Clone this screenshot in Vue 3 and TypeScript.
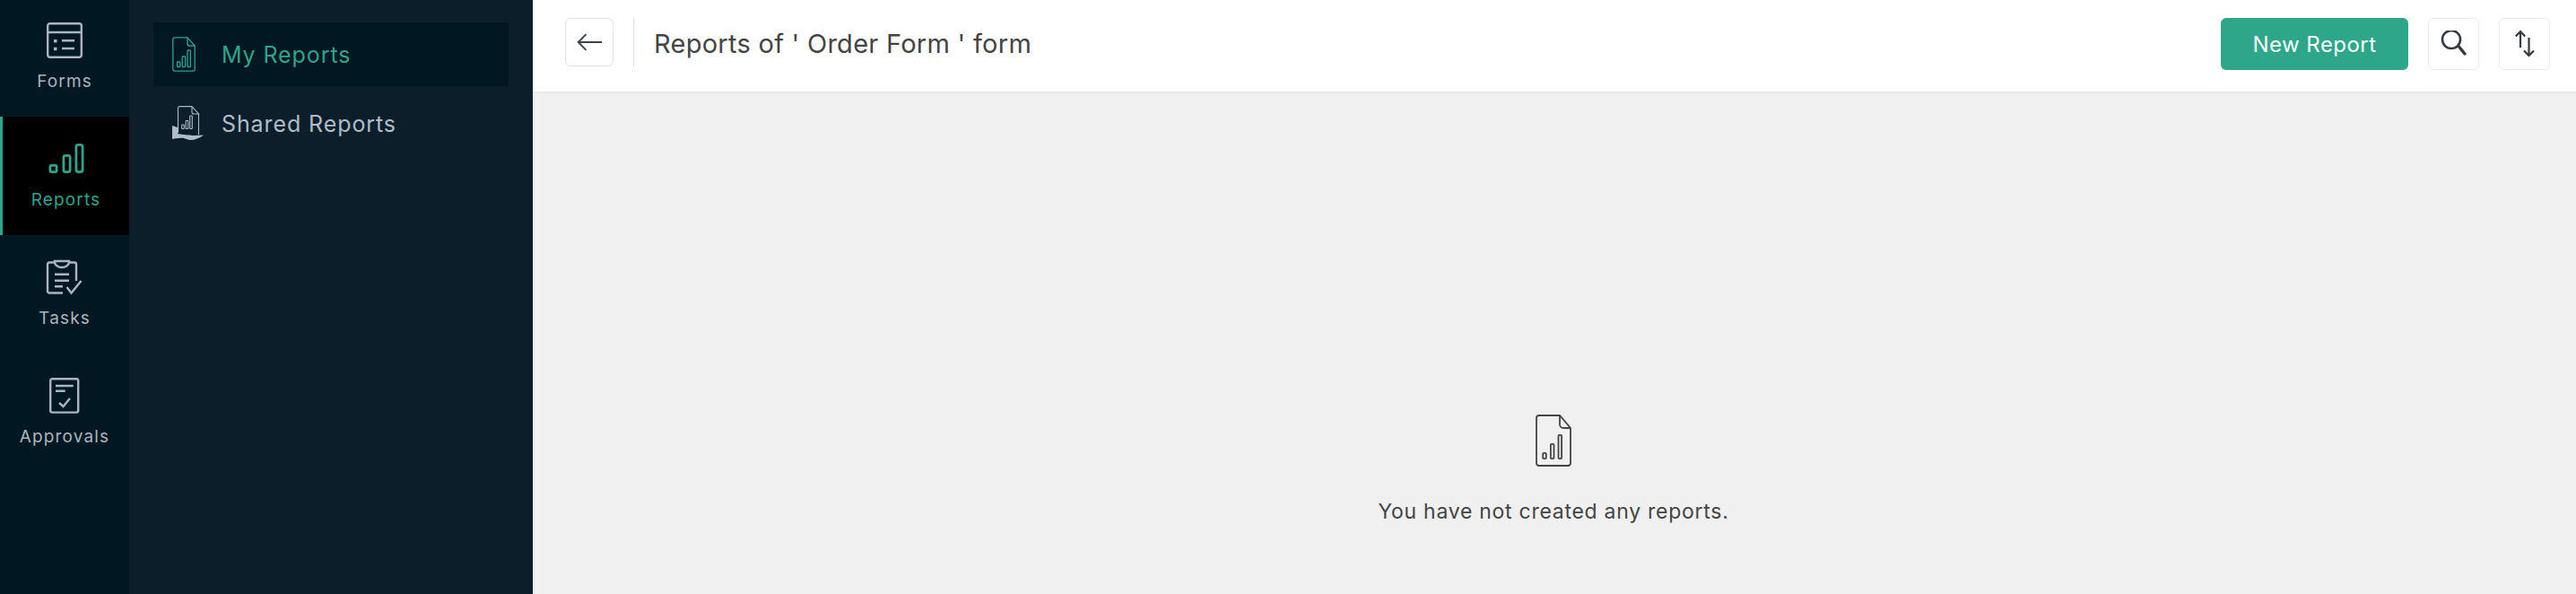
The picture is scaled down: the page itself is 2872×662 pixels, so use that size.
<script setup lang="ts">
const railItems = [
  { key: 'forms', label: 'Forms', active: false },
  { key: 'reports', label: 'Reports', active: true },
  { key: 'tasks', label: 'Tasks', active: false },
  { key: 'approvals', label: 'Approvals', active: false },
]
</script>

<template>
  <div class="app">
    <nav class="rail">
      <a
        v-for="item in railItems"
        :key="item.key"
        class="rail-item"
        :class="{ active: item.active }"
      >
        <svg class="rail-icon" viewBox="0 0 44 44" fill="none" stroke="currentColor" stroke-width="2.4">
          <template v-if="item.key === 'forms'">
            <rect x="3.2" y="3.2" width="37.6" height="37.6" rx="2.5" />
            <path d="M3 13h38M19 22.300h14M19 31h14" />
            <path d="M10 21h3.500v3.500H10zM10 29.700h3.500v3.500H10z" fill="currentColor" stroke="none" />
          </template>
          <template v-else-if="item.key === 'reports'">
            <rect x="3.900" y="29.400" width="7.200" height="7.200" rx="1.500" stroke-width="2.800" />
            <rect x="18.900" y="18.400" width="7.200" height="18.200" rx="2" stroke-width="2.800" />
            <rect x="32.900" y="6.400" width="7.200" height="30.200" rx="2.500" stroke-width="2.800" />
          </template>
          <template v-else-if="item.key === 'tasks'">
            <path d="M20 39.500H5a2 2 0 0 1-2-2V7.500a2 2 0 0 1 2-2h6M27 5.500h6a2 2 0 0 1 2 2V26" />
            <path d="M11 4h16v1a8 6 0 0 1-16 0z" />
            <path d="M11 18.700h16M11 25.700h16M11 32.300h9" />
            <path d="M24.500 33l5 6.500 11-13.500" />
          </template>
          <template v-else>
            <rect x="6.200" y="3.200" width="31" height="37.400" rx="2" />
            <path d="M12 11h19.700M12 16.700h10.700M16 30l4.500 4 7.500-9" />
          </template>
        </svg>
        <span>{{ item.label }}</span>
      </a>
    </nav>

    <aside class="subnav">
      <a class="sub-item active">
        <span class="sub-icon">
          <svg width="26" height="39" viewBox="0 0 26 39" fill="none" stroke="currentColor" stroke-width="1.300">
            <path d="M17 .8H3A2.300 2.300 0 0 0 .8 3v33A2.300 2.300 0 0 0 3 38.200h20a2.300 2.300 0 0 0 2.200-2.200V10z" />
            <path d="M17 .8V8a2 2 0 0 0 2 2h6.200" />
            <rect x="5.500" y="28" width="3.400" height="5.500" rx=".8" />
            <rect x="11.200" y="22" width="3.400" height="11.500" rx=".8" />
            <rect x="17" y="15" width="3.400" height="18.500" rx=".8" />
          </svg>
        </span>
        My Reports
      </a>
      <a class="sub-item">
        <span class="sub-icon">
          <svg width="35" height="39" viewBox="0 0 35 39" fill="none" stroke="currentColor" stroke-width="1.100">
            <path d="M22 .6H8.500a2 2 0 0 0-2 2V30M29.500 32V9" />
            <path d="M22 .6V7a2 2 0 0 0 2 2h5.500L22 .6" />
            <rect x="10.700" y="21" width="2.600" height="4.500" rx=".6" />
            <rect x="15.200" y="16.500" width="2.600" height="9" rx=".6" />
            <rect x="19.700" y="11" width="2.600" height="14.500" rx=".6" />
            <path d="M0 22l6 2v7c6 1 12 1.500 17 2 4 .3 8-.5 12-.5-3 2.500-7 4.500-12 5.500-4 .5-7-1-10-2-4-.7-9 .5-13 1z" fill="currentColor" stroke="none" />
          </svg>
        </span>
        Shared Reports
      </a>
    </aside>

    <main class="main">
      <header class="topbar">
        <button class="icon-btn back" type="button">
          <svg width="28" height="20" viewBox="0 0 28 20" fill="none" stroke="#3c4248" stroke-width="1.900">
            <path d="M28 10H2M10.500 1.200 1.700 10l8.800 8.800" />
          </svg>
        </button>
        <span class="divider" />
        <h1 class="title">Reports of ' Order Form ' form</h1>
        <button class="primary" type="button">New Report</button>
        <button class="icon-btn" type="button">
          <svg width="30" height="30" viewBox="0 0 30 30" fill="none" stroke="#343a40">
            <circle cx="12" cy="10" r="10" stroke-width="2.600" />
            <path d="M20.500 18l6.500 8" stroke-width="3.400" stroke-linecap="round" />
          </svg>
        </button>
        <button class="icon-btn" type="button">
          <svg width="24" height="32" viewBox="0 0 24 32" fill="none" stroke="#343a40" stroke-width="2.200">
            <path d="M7 20V2M1.800 7.500 7 2l5.200 5.500" />
            <path d="M16.500 9v20M11 23.500l5.500 5.500 5.500-5.500" />
          </svg>
        </button>
      </header>

      <section class="empty">
        <svg width="40" height="58" viewBox="0 0 40 58" fill="none" stroke="#444" stroke-width="1.800">
          <path d="M27 1H4a3 3 0 0 0-3 3v50a3 3 0 0 0 3 3h32a3 3 0 0 0 3-3V15z" />
          <path d="M27 1v10a4 4 0 0 0 4 4h8" />
          <rect x="8.200" y="42.900" width="3.600" height="6.200" rx=".8" />
          <rect x="16.900" y="32.900" width="3.600" height="16.200" rx=".8" />
          <rect x="25.500" y="22.900" width="3.600" height="26.200" rx=".8" />
        </svg>
        <p>You have not created any reports.</p>
      </section>
    </main>
  </div>
</template>

<style>
html,
body {
  margin: 0;
  background: #f0f0f0;
}
</style>

<style scoped>
.app {
  display: flex;
  height: 662px;
  overflow: hidden;
  font-family: Inter, "Liberation Sans", sans-serif;
}

.rail {
  width: 144px;
  flex-shrink: 0;
  background: #011722;
  color: #a9b5bf;
}

.rail-item {
  height: 132px;
  display: flex;
  flex-direction: column;
  align-items: center;
  box-sizing: border-box;
  padding-top: 25px;
  font-size: 19px;
  line-height: 24px;
  letter-spacing: 1.15px;
}

.rail-item:first-child {
  margin-top: -2px;
}

.rail-item.active {
  background: #000;
  color: #2da58a;
  border-left: 3px solid #2da58a;
}

.rail-icon {
  width: 44px;
  height: 44px;
  margin-bottom: 12px;
}

.subnav {
  width: 450px;
  flex-shrink: 0;
  box-sizing: border-box;
  padding: 25px 27px;
  background: #0b1e2a;
  display: flex;
  flex-direction: column;
  gap: 6px;
}

.sub-item {
  height: 71px;
  display: flex;
  align-items: center;
  padding-left: 21px;
  color: #b0bcc6;
  font-size: 25px;
  letter-spacing: 0.9px;
}

.sub-item.active {
  background: #011722;
  color: #2da58a;
}

.sub-icon {
  width: 55px;
  flex-shrink: 0;
  display: flex;
}

.main {
  flex: 1;
  display: flex;
  flex-direction: column;
  background: #f0f0f0;
}

.topbar {
  height: 104px;
  box-sizing: border-box;
  display: flex;
  align-items: flex-start;
  padding: 20px 29px 0 36px;
  background: #fff;
  border-bottom: 2px solid #e9e9e9;
}

.icon-btn {
  width: 57px;
  height: 58px;
  padding: 0;
  margin-left: 22px;
  display: flex;
  align-items: center;
  justify-content: center;
  background: #fff;
  border: 1px solid #e8e9eb;
  border-radius: 6px;
}

.icon-btn.back {
  width: 54px;
  height: 54px;
  margin-left: 0;
  border-color: #e2e2e2;
}

.divider {
  width: 1px;
  height: 54px;
  margin: 0 22px;
  background: #e0e0e0;
}

.title {
  flex: 1;
  margin: 0;
  font-size: 29px;
  line-height: 58px;
  font-weight: 400;
  color: #444;
  letter-spacing: 0.27px;
}

.primary {
  width: 209px;
  height: 58px;
  padding: 0;
  border: 0;
  border-radius: 6px;
  background: #2ea689;
  color: #fff;
  font-family: inherit;
  font-size: 24px;
  letter-spacing: 0.45px;
}

.empty {
  display: flex;
  flex-direction: column;
  align-items: center;
  padding: 358px 2px 0 0;
  color: #444;
}

.empty p {
  margin: 35px 0 0;
  font-size: 23px;
  line-height: 30px;
  letter-spacing: 0.73px;
}
</style>
